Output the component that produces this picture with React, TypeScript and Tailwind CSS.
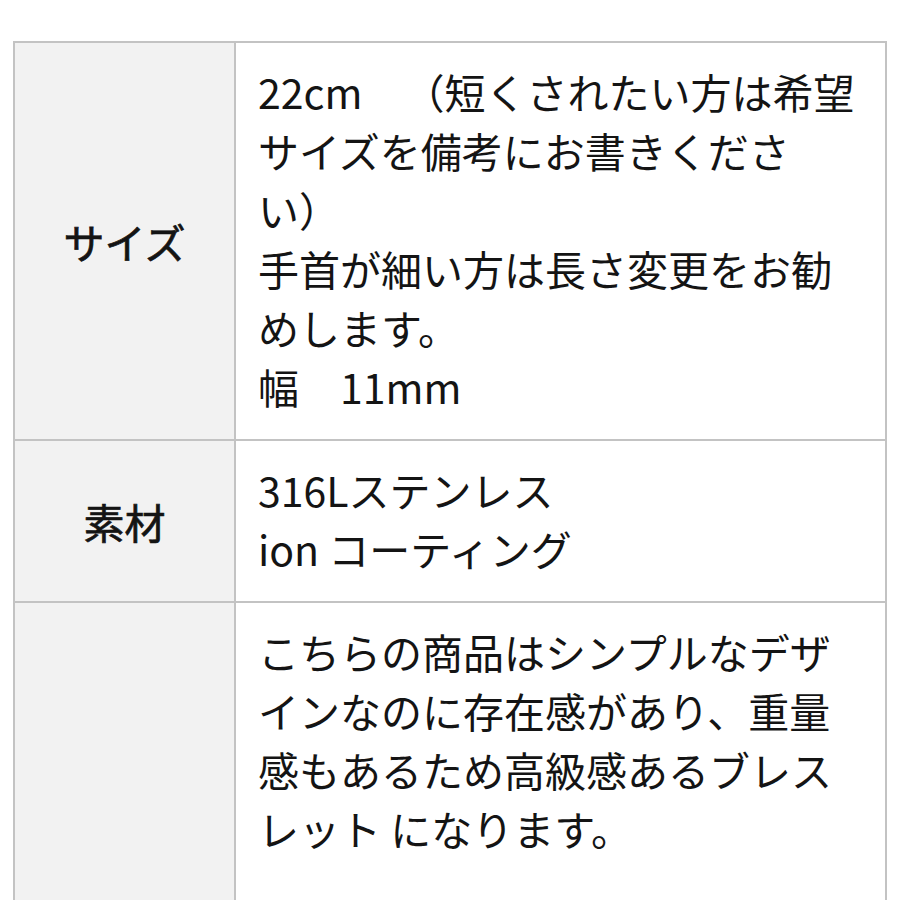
import React from 'react';

const rows = [
  {
    label: 'サイズ',
    lines: [
      '22cm\u3000（短くされたい方は希望サイズを備考にお書きください）',
      '手首が細い方は長さ変更をお勧めします。',
      '幅\u300011mm',
    ],
  },
  {
    label: '素材',
    lines: ['316Lステンレス', 'ion コーティング'],
  },
  {
    label: '',
    lines: ['こちらの商品はシンプルなデザインなのに存在感があり、重量感もあるため高級感あるブレスレット になります。'],
  },
];

const App = () => {
  return (
    <div
      className="w-[900px] h-[900px] overflow-hidden bg-white pl-[13px] pt-[41px] text-[#141414] [text-spacing-trim:space-all]"
      style={{ fontFamily: '"Noto Sans CJK JP", "Noto Sans", sans-serif' }}
    >
      <table className="w-[874px] border-collapse text-[41px] leading-[59px]">
        <tbody>
          {rows.map((row, i) => (
            <tr key={i}>
              <th
                className={
                  'w-[221px] border-2 border-[#c3c3c3] bg-[#f2f2f2] text-center align-middle font-normal [-webkit-text-stroke:0.7px_#141414] ' +
                  (i === 2 ? 'h-[340px]' : '')
                }
              >
                {row.label}
              </th>
              <td
                className={
                  'border-2 border-[#c3c3c3] bg-white pl-[22px] pr-[20px] pt-[19px] align-top ' +
                  (i === 2 ? 'pb-[80px]' : 'pb-[23px]')
                }
              >
                {row.lines.map((line, j) => (
                  <div key={j}>{line}</div>
                ))}
              </td>
            </tr>
          ))}
        </tbody>
      </table>
    </div>
  );
};

export default App;
